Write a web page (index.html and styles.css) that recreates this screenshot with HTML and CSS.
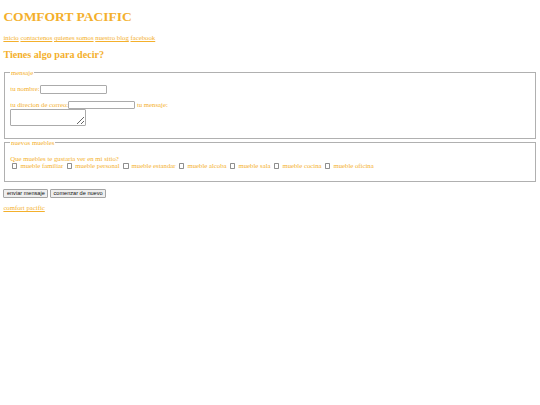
FILE: index.html
```html
<!DOCTYPE html>
<html lang="es">
<head>
<meta charset="utf-8">
<title>Comfort Pacific</title>
<link rel="stylesheet" href="styles.css">
</head>
<body class="page">
<h1 class="title">COMFORT PACIFIC</h1>
<p class="nav"><a class="link" href="#">inicio</a> <a class="link" href="#">contactenos</a> <a class="link" href="#">quienes somos</a> <a class="link" href="#">nuestro blog</a> <a class="link" href="#">facebook</a></p>
<h2 class="subtitle">Tienes algo para decir?</h2>
<form class="form">
<fieldset class="group">
<legend class="legend">mensaje</legend>
<p class="row"><label class="label">tu nombre:</label><input class="field" type="text"></p>
<p class="row"><label class="label">tu direcion de correo:</label><input class="field" type="text"> <label class="label">tu mensaje:</label><br><textarea class="area"></textarea></p>
</fieldset>
<fieldset class="group">
<legend class="legend">nuevos muebles</legend>
<p class="row">Que muebles te gustaria ver en mi sitio?<br>
<input class="check" type="checkbox"> mueble familiar
<input class="check" type="checkbox"> mueble personal
<input class="check" type="checkbox"> mueble estandar
<input class="check" type="checkbox"> mueble alcoba
<input class="check" type="checkbox"> mueble sala
<input class="check" type="checkbox"> mueble cocina
<input class="check" type="checkbox"> mueble oficina</p>
</fieldset>
<p class="actions"><button class="btn" type="submit">enviar mensaje</button> <button class="btn" type="reset">comenzar de nuevo</button></p>
</form>
<p class="footer"><a class="link" href="#">comfort pacific</a></p>
</body>
</html>
```
FILE: styles.css
```css
html {
  background: #ffffff;
}
.page {
  margin: 0 3.375px 3.375px;
  padding: 0;
  font-family: "Liberation Serif", "Times New Roman", serif;
  font-size: 6.75px;
  color: #f4b02c;
}
.title {
  font-size: 13.5px;
  font-weight: bold;
  margin: 9.05px 0;
}
.nav {
  margin: 6.75px 0;
}
.link {
  color: #f4b02c;
  text-decoration: underline;
}
.subtitle {
  font-size: 10.125px;
  font-weight: bold;
  margin: 8.4px 0;
}
.form {
  margin: 0;
}
.group {
  margin: 0 0.85px;
  padding: 2.36px 5.06px 4.22px;
  border: 0.84px solid #b0b0b0;
  min-width: 0;
}
.legend {
  padding: 0 0.85px;
}
.row {
  margin: 6.75px 0;
}
.field {
  width: 67px;
  height: 8.86px;
  box-sizing: border-box;
  margin: 0;
  padding: 0 1px;
  border: 0.85px solid #ababab;
  border-radius: 1px;
  font-size: 5.6px;
  vertical-align: baseline;
}
.area {
  width: 76px;
  height: 16.4px;
  box-sizing: border-box;
  margin: 0;
  padding: 0.85px;
  border: 0.85px solid #ababab;
  border-radius: 1px;
  font-size: 5.6px;
  vertical-align: baseline;
  resize: both;
}
.check {
  appearance: none;
  -webkit-appearance: none;
  box-sizing: border-box;
  width: 5.5px;
  height: 5.5px;
  margin: 1.3px 1.3px 1.3px 1.7px;
  border: 0.85px solid #8f8f8f;
  border-radius: 0.8px;
  background: #ffffff;
  vertical-align: -2.1px;
}
.actions {
  margin: 6.75px 0;
}
.btn {
  font-family: "Liberation Sans", Arial, sans-serif;
  font-size: 5.6px;
  color: #111111;
  background: #efefef;
  border: 0.85px solid #a5a5a5;
  border-radius: 1px;
  padding: 0.4px 2.5px;
  margin: 0;
  height: 9px;
}
.footer {
  margin: 6.75px 0;
}
```
